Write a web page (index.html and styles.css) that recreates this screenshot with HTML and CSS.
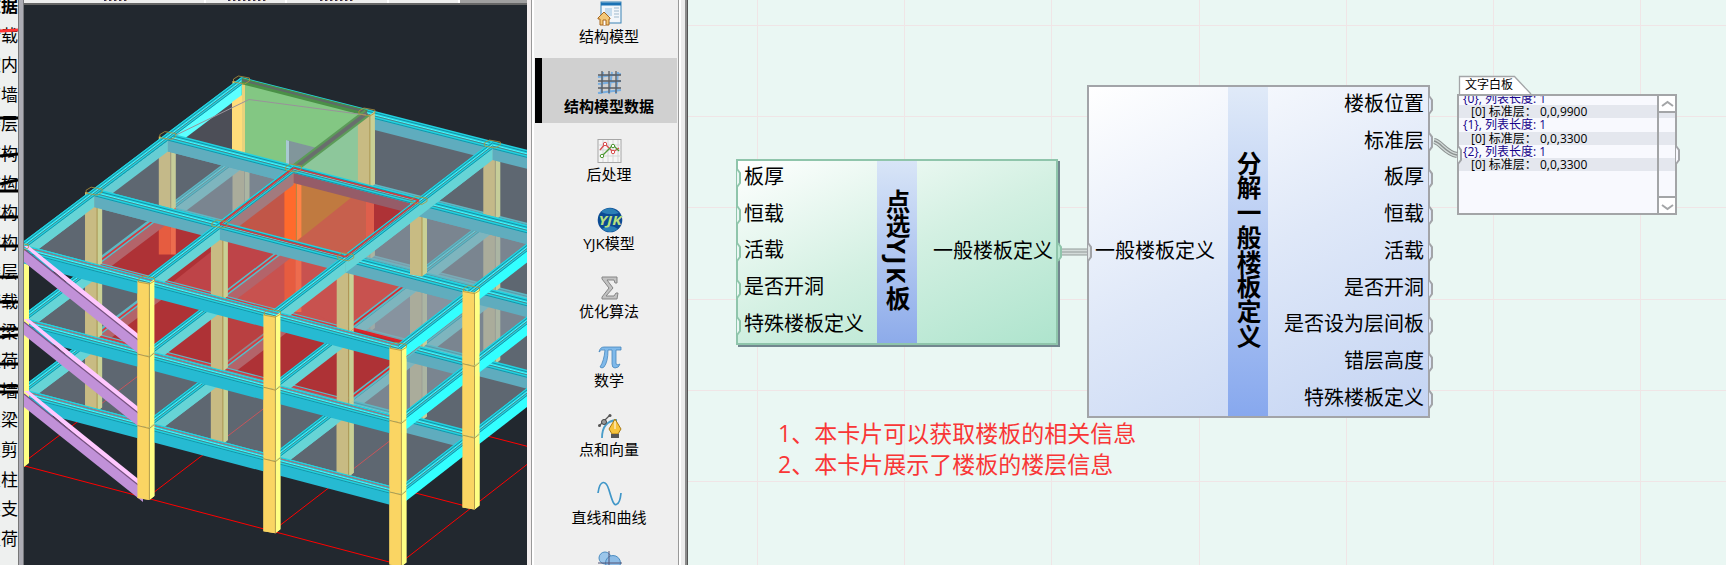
FILE: index.html
```
<!DOCTYPE html>
<html lang="zh-CN">
<head>
<meta charset="utf-8">
<title>结构模型数据</title>
<link rel="stylesheet" href="styles.css">
</head>
<body>
<div class="app">
  <aside class="tree">
    <span class="tree-row bold">数据</span><span class="tree-row">荷载</span><span class="tree-row">室内</span><span class="tree-row">剪墙</span><span class="tree-row">楼层</span><span class="tree-row">结构</span><span class="tree-row">结构</span><span class="tree-row">结构</span><span class="tree-row">结构</span><span class="tree-row">楼层</span><span class="tree-row">荷载</span><span class="tree-row">架梁</span><span class="tree-row">定荷</span><span class="tree-row">剪墙</span><span class="tree-row">架梁</span><span class="tree-row">架剪</span><span class="tree-row">架柱</span><span class="tree-row">架支</span><span class="tree-row">定荷</span>
    <svg class="marks" width="18" height="565"><path d="M0 31L18 30" stroke="#ff3434" stroke-width="3"/><path d="M0 118h18M0 156l18-2M0 184l18-4M0 191h18M0 217h18M0 246h18M0 277h18M0 302h18M0 329h18M0 337l18-2M0 364h18M0 386h18M0 392h18" stroke="#000" stroke-width="3"/></svg>
  </aside>
  <div class="gutter"></div>
  <section class="viewport">
    <div class="tabs"><i class="t1"></i><i class="t2"></i><i class="t3"></i><i class="t4"></i></div>
    <svg id="model" viewBox="24 5 503 560" width="503" height="560"></svg>
  </section>
  <nav class="side">
    <div class="item first"><svg width="26" height="26" viewBox="0 0 26 26"><rect x="4" y="2" width="20" height="21" fill="#f2f6fa" stroke="#3a83b5"/><path d="M4 4h20" stroke="#1b72b4" stroke-width="3"/><path d="M8 8h7v8H8z" fill="#c5dced"/><path d="M17 8h5M17 11h5M17 14h5M17 17h5" stroke="#9fb9cc"/><path d="M1 18l6-6 6 6v1h-1v6H3v-6H1z" fill="#f3c878" stroke="#a8671d"/><path d="M6 25v-5h3v5" fill="#fff" stroke="#a8671d"/></svg><b>结构模型</b></div>
    <div class="item active"><svg width="26" height="26" viewBox="0 0 26 26"><path d="M1 7l23-3M1 14l23-3M1 23l23-3M4 24L6 2M12 24l3-22M19 24l2-22" stroke="#78aee0" stroke-width="2"/><path d="M1 5h23M1 11h23M1 18h23M5 1v22M12 1v22M19 1v22" stroke="#5a5d63" stroke-width="1.3"/></svg><b>结构模型数据</b></div>
    <div class="item"><svg width="26" height="26" viewBox="0 0 26 26"><rect x="1" y="1.500" width="23" height="23" fill="#f5f5f5" stroke="#a6a6a6"/><path d="M6 2v22M11 2v22M16 2v22M21 2v22M2 7h22M2 12h22M2 18h22" stroke="#d5d5d5"/><path d="M3 12l5-6 8 8 6-4" fill="none" stroke="#d94c4c" stroke-width="1.300"/><path d="M5 18L16 7l6 6" fill="none" stroke="#4f9a34" stroke-width="1.300"/><g fill="#fff"><circle cx="8" cy="6" r="1.700" stroke="#d94c4c"/><circle cx="16" cy="14" r="1.700" stroke="#d94c4c"/><circle cx="5" cy="18" r="1.700" stroke="#4f9a34"/><circle cx="16" cy="8" r="1.700" stroke="#4f9a34"/></g></svg><b>后处理</b></div>
    <div class="item"><svg width="26" height="26" viewBox="0 0 26 26"><circle cx="13" cy="13" r="12.300" fill="#0b4a94"/><path d="M4 5Q13-3 22 6 13 9 4 5M5 22q8-6 16 0-8 6-16 0" fill="#2b7fb6"/><text x="13" y="17.500" text-anchor="middle" textLength="23" lengthAdjust="spacingAndGlyphs" class="logo">YJK</text></svg><b>YJK模型</b></div>
    <div class="item"><svg width="26" height="26" viewBox="0 0 26 26"><path d="M5 2h15v6h-2l-1-3h-7l6 8-7 8h8l2-3h2l-1 6H5v-2l7-9-7-9z" fill="#c2c2c2" stroke="#858585"/></svg><b>优化算法</b></div>
    <div class="item"><svg width="26" height="26" viewBox="0 0 26 26"><path d="M2 8Q3 3 7 3h17v3h-5v13q0 3 4 1-1 4-5 4-3 0-3-4V6h-4q0 12-4 17-2 2-4 0 4-6 5-17-4-1-6 2z" fill="#7fb9ea" stroke="#4687bd" stroke-width=".8"/></svg><b>数学</b></div>
    <div class="item"><svg width="26" height="26" viewBox="0 0 26 26"><path d="M5 25q0-17 15-18" fill="none" stroke="#4a9dc9" stroke-width="1.800"/><path d="M2 13L13 2" stroke="#555" stroke-width="1.300"/><circle cx="2.500" cy="12.500" r="1.500" fill="#555"/><circle cx="13" cy="2.500" r="1.500" fill="#555"/><circle cx="7" cy="9" r="2.500" fill="#999" stroke="#444"/><path d="M18 6l6 10-3 5h-6l-3-5z" fill="#f6c33c" stroke="#a97a14"/><path d="M18 8v8" stroke="#fff"/><path d="M14 21h8v4h-8z" fill="#555"/></svg><b>点和向量</b></div>
    <div class="item"><svg width="26" height="26" viewBox="0 0 26 26"><path d="M1 12C3-2 9-1 12 9s5 17 8 14q3-1 4-11" fill="none" stroke="#3f96c8" stroke-width="1.700"/></svg><b>直线和曲线</b></div>
    <div class="item"><svg width="26" height="26" viewBox="0 0 26 26"><circle cx="8" cy="8" r="6" fill="#9cc6ea" stroke="#4d8ec2"/><circle cx="16" cy="13" r="7.500" fill="#8dbce6" stroke="#4d8ec2"/><path d="M12 1v24M1 13h24" stroke="#557"/></svg></div>
  </nav>
  <main class="canvas">
    <svg class="wires" width="1038" height="565" viewBox="688 0 1038 565"><g fill="none"><path d="M1060 252h28" stroke="#939b99" stroke-width="7"/><path d="M1060 252h28" stroke="#d3dbd9" stroke-width="5"/><path d="M1060 252h28" stroke="#939b99"/></g></svg>
    <section class="node pick">
      <div class="inputs"><span>板厚</span><span>恒载</span><span>活载</span><span>是否开洞</span><span>特殊楼板定义</span></div>
      <h2>点选<span class="latin">YJK</span>板</h2>
      <div class="outputs"><span>一般楼板定义</span></div>
    </section>
    <section class="node split">
      <div class="inputs"><span>一般楼板定义</span></div>
      <h2>分解一般楼板定义</h2>
      <div class="outputs"><span>楼板位置</span><span>标准层</span><span>板厚</span><span>恒载</span><span>活载</span><span>是否开洞</span><span>是否设为层间板</span><span>错层高度</span><span>特殊楼板定义</span></div>
    </section>
    <section class="board">
      <div class="rows"><p>{0}, 列表长度: 1</p><p class="v">[0] 标准层：&nbsp;0,0,9900</p><p>{1}, 列表长度: 1</p><p class="v">[0] 标准层：&nbsp;0,0,3300</p><p>{2}, 列表长度: 1</p><p class="v">[0] 标准层：&nbsp;0,0,3300</p></div>
      <div class="scroll"><svg width="17" height="17"><path d="M3 10l5.500-4 5.500 4" /></svg><svg width="17" height="17"><path d="M3 7l5.500 4L14 7"/></svg></div>
    </section>
    <svg class="ports" id="ports" width="1038" height="565" viewBox="688 0 1038 565"><path d="M1459.500 94V76.500h55L1531 94" fill="#fff" stroke="#a3a5a7" stroke-width="1.300"/></svg>
    <span class="tab-title">文字白板</span>
    <div class="note"><p>1、本卡片可以获取楼板的相关信息</p><p>2、本卡片展示了楼板的楼层信息</p></div>
  </main>
</div>
<script src="scene.js"></script>
</body>
</html>
```
FILE: styles.css
```
*{box-sizing:border-box}
body{margin:0;overflow:hidden;font-family:"Open Sans","Noto Sans CJK SC",sans-serif;color:#000}
p,h2{margin:0}
.app{display:grid;grid-template-columns:18px 6px 503px 161px 1038px;height:565px}
.tree{position:relative;overflow:hidden;background:#eef0ef;height:565px;display:flex;flex-direction:column;align-items:flex-end;padding-right:0}
.tree-row{flex:none;height:29.600px;line-height:29.600px;font-size:17px;white-space:nowrap}
.tree-row:first-child{margin-top:-9px}
.bold{font-weight:700}
.marks{position:absolute;left:0;top:0}
.gutter{background:#acacb4;border-left:1px solid #777;border-right:1px solid #77787c}
.viewport{background:#22282f;overflow:hidden;height:565px}
.tabs{height:5px;background:#a0a0a0;border-bottom:2px solid #666;display:flex}
.tabs i{height:3px;background:#ededed;border-right:2px solid #fff;position:relative}
.t1{width:182px}.t2{width:81px}.t3{width:102px}.t4{width:71px}
.tabs i::after{content:"";display:block;height:1px;background:repeating-linear-gradient(90deg,#35335a 0 2px,#c9a26b 2px 3px,#ededed 3px 5px)}
.tabs .t1::after{width:23px;margin-left:80px}.tabs .t2::after{width:38px;margin-left:22px}.tabs .t3::after{width:34px;margin-left:33px}.tabs .t4::after{display:none}
#model{display:block}
.side{height:565px;overflow:hidden;background:linear-gradient(90deg,#f2eeee 4px,#999 4px 5px,#fff 5px 7px,#efefef 7px 151px,#999 151px 152px,#fff 152px 154px,#ececec 154px 158px,#8a8a8a 158px 160px,#555 160px)}
.item{height:68.700px;width:143px;margin-left:8px;padding:12px 0 0 6px;display:flex;flex-direction:column;align-items:center;font-size:15px;line-height:21px}
.item.first{height:58px;padding-top:0}
.item.active{background:#d0d0d0;border-left:7px solid #000;height:65px;width:142px;padding:12px 0 0;margin-bottom:3px}
.item svg{flex:none}
.item b{font-weight:400;white-space:nowrap;padding-right:1px}
.item.active b{font-weight:700;padding-right:1px}
.logo{font:bold italic 12px "Open Sans",sans-serif;fill:#b9e07f}
.canvas{position:relative;overflow:hidden;background:repeating-linear-gradient(90deg,transparent 0 69px,#f0e5e6 69px 70px,transparent 70px 147.200px),repeating-linear-gradient(180deg,transparent 0 25px,#f0e5e6 25px 26px,transparent 26px 91.200px),#eaf7f3}
.wires,.ports{position:absolute;left:0;top:0}
.node{position:absolute;display:flex;font-size:20px;line-height:36.700px;white-space:nowrap}
.node h2{width:40px;flex:none;font-size:24.700px;line-height:38px;writing-mode:vertical-rl;text-align:center;background:linear-gradient(#d8e5f7,#8dabea);padding-right:2px;padding-bottom:4px}
.latin{letter-spacing:2.500px}
.pick{left:48px;top:159px;width:322px;height:186px;border:2px solid #8fc5ab;background:linear-gradient(155deg,#fff,#d3f0e2 50%,#aee4cd);box-shadow:2px 2px #72878f}
.pick .inputs{width:139px;padding-left:6px;margin-top:-2px}
.inputs,.outputs{display:flex;flex-direction:column}
.pick .outputs{flex:1;align-items:flex-end;justify-content:center;padding-right:3px;padding-bottom:2px}
.pick .inputs span{height:36.700px}
.split{left:399px;top:85px;width:343px;height:333px;border:2px solid #a2a4a8;background:linear-gradient(155deg,#fff,#dfe8f8 50%,#c4d4f3)}
.split .inputs{width:139px;padding-left:6px;justify-content:center;padding-bottom:1px}
.split .outputs{flex:1;align-items:flex-end;padding-right:4px;margin-top:-1px}
.split h2{background:linear-gradient(#e0eaf8,#87a8ee)}
.board{position:absolute;left:769px;top:94px;width:220px;height:121px;border:2px solid #a3a5a7;background:#f8f9fe;display:flex;overflow:hidden}
.rows{width:198px;font-size:12px;line-height:13.200px;margin-top:-4px;color:#16028a;white-space:nowrap}
.rows p{height:13.200px;padding-left:4px}
.rows .v{background:#e4e7ee;width:216px;padding-left:12px;color:#000}
.scroll{width:19px;border-left:2px solid #a3a5a7;display:flex;flex-direction:column;justify-content:space-between;position:relative}
.scroll svg{background:#fff;flex:none}
.scroll svg:first-child{border-bottom:2px solid #a3a5a7}
.scroll svg:last-child{border-top:2px solid #a3a5a7}
.scroll path{fill:none;stroke:#a3a5a7;stroke-width:2}
.tab-title{position:absolute;left:777px;top:77px;font-size:12px;line-height:16px}
.note{position:absolute;left:90px;top:418px;color:#f93636;font-size:23px;line-height:31px;white-space:nowrap}
```
FILE: scene.js
```
(() => {
const svg = document.getElementById('model');
const drop = [217, 144.5, 73, 0];
const out = [];
const node = (c, r, l) => [241.5 + 125.4 * c - 73.7 * r + c * r * 0.2, 81 + 32 * c + 55.6 * r + c * r * 0.4 + drop[l]];
const poly = (pts, fill, extra = '') => out.push(`<polygon points="${pts.map(p => p.join()).join(' ')}" fill="${fill}" ${extra}/>`);
const line = (a, b, color, w = 1, dy = 0) => out.push(`<line x1="${a[0]}" y1="${a[1] + dy}" x2="${b[0]}" y2="${b[1] + dy}" stroke="${color}" stroke-width="${w}"/>`);
const band = (a, b, t, u, fill, extra) => poly([[a[0], a[1] + t], [b[0], b[1] + t], [b[0], b[1] + u], [a[0], a[1] + u]], fill, extra);

const hi = { row: '#26bad2', col: '#33ffff', left: '#fad563', right: '#ffff84' };
const lo = { row: '#60adbe', col: '#66d4d6', left: '#c8bb83', right: '#c9d095' };
function beamTop(a, b) {
  band(a, b, -4, 4, '#22d3e0');
  line(a, b, '#168fa5', 1, -2);
  line(a, b, '#4df7ff', 1, 0);
  line(a, b, '#566c72', .8, 1);
  line(a, b, '#1793a8', 1, 3.5);
}
const dimTop = (a, b) => { band(a, b, -4, 4, '#59bcc8'); line(a, b, '#8a6d74', 1, -1); line(a, b, '#2a95a8', 1, 2); };
const face = (a, b, fill) => band(a, b, 3, 15, fill);
function column(c, r, l, tone, u = drop[l - 1] - drop[l]) {
  const [x, y] = node(c, r, l);
  poly([[x - 9, y], [x + 3, y + 2], [x + 3, y + u + 2], [x - 9, y + u]], tone.left);
  poly([[x + 3, y + 2], [x + 8, y - 2], [x + 8, y + u - 2], [x + 3, y + u + 2]], tone.right);
  line([x + 3, y + 2], [x + 3, y + u + 2], '#a38a43', .8);
}
const cell = (c, r, l, fill, extra) => poly([node(c, r, l), node(c + 1, r, l), node(c + 1, r + 1, l), node(c, r + 1, l)], fill, extra);

for (let i = 0; i < 4; i++) {
  line(node(0, i, 0), node(3, i, 0), '#f00');
  line(node(i, 0, 0), node(i, 3, 0), '#f00');
}
for (let l = 1; l < 4; l++) {
  for (let r = 0; r < 4; r++) for (let c = 0; c < 4; c++) column(c, r, l, hi);
  for (let r = 0; r < 3; r++) for (let c = 0; c < 3; c++) {
    face(node(c, r, l), node(c + 1, r, l), hi.row);
    face(node(c, r, l), node(c, r + 1, l), hi.col);
  }
  for (let r = 0; r < 3; r++) for (let c = 0; c < 3; c++)
    if (!(l === 3 && r < 2 && c === r)) cell(c, r, l, 'rgb(147,160,172)', 'fill-opacity=".53"');
  for (let i = 0; i < 4; i++) for (let j = 0; j < 3; j++) {
    beamTop(node(j, i, l), node(j + 1, i, l));
    beamTop(node(i, j, l), node(i, j + 1, l));
  }
}
/* shear walls around the open corner bay */
const A0 = node(0, 0, 3), B0 = node(1, 0, 3), A1 = node(0, 1, 3), B1 = node(1, 1, 3);
poly([[232, 90], [232, 153], A1], '#4c4e57');
poly([A0, A1, [184, 139], [241, 96]], '#5cffff');
poly([[232, 102], [242, 95], [242, 156], [232, 153]], '#ffdd7a');
poly([[242, 84], [245, 84], [245, 157], [242, 156]], '#e9d27c');
poly([[245, 84], B0, B1, [245, 157]], '#83c783');
poly([B0, [366, 186], B1], '#8dc79b');
poly([[286, 140], [317, 148], [292, 168], [286, 164]], '#81969b');
poly([[286, 140], [289, 141], [289, 165], [286, 164]], '#a9c9d2');
column(1, 0, 3, lo);
line(A0, B0, '#4a9047', 6, 0);
line(A0, B0, '#5f6867', 2, -1);
line(B0, B1, '#5c9b59', 8); line(B0, B1, '#696e6d', 4);
out.push('<path d="M172 137L249 99.500L366 115" fill="none" stroke="#99929a"/>');

/* selected slabs */
const warm = { left: '#e65c40', right: '#ed6c4e' };
const glow = { left: '#ff6a2c', right: '#ff8347' };
const redBeams = l => {
  band(node(0, 1, l), node(0, 2, l), 3, 14, '#b3646a');
  band(node(1, 1, l), node(1, 2, l), 3, 14, '#b3646a');
  line(node(0, 1, l), node(0, 2, l), '#59bcc8', 5, 0);
  line(node(1, 1, l), node(1, 2, l), '#59bcc8', 5, 0);
  line(node(0, 1, l), node(0, 2, l), '#d8383e', 1.800);
  line(node(1, 1, l), node(1, 2, l), '#d8383e', 1.800);
  line(node(0, 1, l), node(2, 1, l), '#e02228', 2.500);
  line(node(2, 1, l), node(2, 2, l), '#59bcc8', 5);
  line(node(2, 1, l), node(2, 2, l), '#d8282e', 1.800);
};
cell(0, 1, 1, '#ae3236');
cell(1, 1, 1, '#ae3236');
column(0, 1, 2, warm);
column(1, 1, 2, warm);
redBeams(1);
cell(0, 1, 2, '#ae3236');
cell(1, 1, 2, '#c8524f');
poly([[168, 286], [222, 243], [244, 231], node(1, 1, 2), node(1, 2, 2)], '#be4448');
poly([node(1, 2, 2), node(1, 2, 1), node(1, 1, 1), [292, 300], node(2, 2, 2)], '#c8524f', 'fill-opacity=".45"');
{
  const [x, y] = A1;
  poly([[x - 9, y + 88], [x + 3, y + 82], [x + 3, y + 118], [x - 9, y + 118]], warm.left);
  poly([[x + 3, y + 82], [x + 8, y + 84], [x + 8, y + 118], [x + 3, y + 118]], warm.right);
  const [bx, by] = node(1, 1, 2);
  poly([[bx - 9, by], [bx + 2, by], [bx + 2, by + 70], [bx - 9, by + 68]], warm.left);
  poly([[bx + 2, by], [bx + 8, by], [bx + 8, by + 70], [bx + 2, by + 70]], warm.right);
}
redBeams(2);
poly([B1, node(2, 1, 3), node(2, 2, 3), node(1, 2, 3)], '#c7604d');
poly([B1, [292, 241], node(1, 2, 3)], '#c15648');
poly([[297, 178], [352, 197], [297, 241]], '#c07a40');
poly([[369, 192], [414, 200], [374, 234], [369, 236]], '#ae3236');
poly([[366, 190], [374, 192], [374, 234], [366, 240]], '#df5f4c');
column(1, 1, 3, glow, 70);
line([230, 226], [346, 256], '#e02228', 3);
band(A1, B1, 3, 15, lo.row);
band(B1, node(2, 1, 3), 3, 14, '#955c68');
band(B1, node(1, 2, 3), 3, 16, '#a27a7e');

/* parts in front of the selected slabs */
for (let l = 1; l < 4; l++) {
  for (const c of [0, 1, 2]) column(c, 2, l, lo);
  for (const c of [0, 1, 2]) {
    const a = node(c, 2, l), b = node(c + 1, 2, l);
    if (l === 3) { face(a, b, lo.row); beamTop(a, b); }
    else if (c < 2) { dimTop(a, b); line(a, b, '#d8383e', 1.500, -2); }
    const e = node(c, 3, l);
    face(a, e, lo.col); beamTop(a, e);
  }
}
column(2, 1, 3, lo);
for (const [a, b] of [[[0, 1], [1, 1]], [[1, 1], [2, 1]], [[2, 1], [3, 1]], [[1, 1], [1, 2]], [[2, 1], [2, 2]], [[2, 0], [2, 1]], [[0, 0], [0, 1]], [[0, 1], [0, 2]]]) {
  const p = node(...a, 3), q = node(...b, 3);
  if (a[0] === 2) face(p, q, a[1] === 1 && b[1] === 1 ? lo.row : lo.col);
  beamTop(p, q);
}
const redEdge = [node(1, 1, 3), node(2, 1, 3), node(2, 2, 3), node(1, 2, 3)];
redEdge.forEach((p, i) => line(p, redEdge[(i + 1) % 4], '#cf3c40', 1.8, -1));

/* outer faces, braces and outer columns */
for (let l = 1; l < 4; l++) {
  for (let i = 0; i < 3; i++) {
    let a = node(i, 3, l), b = node(i + 1, 3, l);
    face(a, b, hi.row); beamTop(a, b); line(a, b, '#d66a6d', .8, -2);
    a = node(3, i, l); b = node(3, i + 1, l);
    face(a, b, hi.col); beamTop(a, b);
  }
}
poly([[24, 264], [29, 266], [29, 463], [24, 467]], hi.right);
for (const d of [0, 73, 145]) {
  poly([[24, 246 + d], [29, 246 + d], [142, 337 + d], [142, 346 + d]], '#ffc8ff');
  poly([[24, 249 + d], [143, 344 + d], [143, 357 + d], [24, 262 + d]], '#c191d8');
  line([24, 249 + d], [142, 343 + d], '#75517f', 1.2);
}
for (const [c, r] of [[3, 2], [1, 3], [2, 3], [3, 3]]) for (let l = 3; l > 0; l--) {
  column(c, r, l, hi);
  const [x, y] = node(c, r, l);
  if (l < 3) out.push(`<path d="M${x - 9} ${y}l12 3l5-4" fill="none" stroke="#a38a43" stroke-width=".8"/>`);
}
for (let r = 0; r < 4; r++) for (let c = 0; c < 4; c++) {
  const [x, y] = node(c, r, 3);
  out.push(`<path d="M${x - 8} ${y + 1}v-3l5-3l11 2v3l-5 3z" fill="none" stroke="#b1953c" stroke-opacity=".8"/>`);
}
svg.innerHTML = out.join('');

const ports = document.getElementById('ports');
const port = (x, y, color, fill) =>
  `<path d="M${x} ${y - 9}l3 4v10l-3 4" fill="${fill}" stroke="${color}" stroke-width="2"/>`;
let p = '';
for (const y of [178, 215, 252, 289, 326]) p += port(737, y, '#8fc5ab', '#eaf7f3');
p += port(1058, 252, '#8fc5ab', '#b8e5d0') + port(1088, 252, '#a2a4a8', '#dfe5e5');
for (let i = 0; i < 9; i++) p += port(1429, 105 + i * 36.8, '#a2a4a8', '#dfe7f7');
p += port(1458, 155, '#a2a4a8', '#eaf7f3') + port(1676, 155, '#a2a4a8', '#f8f9fe');
p += '<g fill="none"><path d="M1434 141C1441 142 1445 153 1457 155" stroke="#8b9190" stroke-width="6"/><path d="M1434 141C1441 142 1445 153 1457 155" stroke="#d3dbd9" stroke-width="4"/><path d="M1434 141C1441 142 1445 153 1457 155" stroke="#8b9190" stroke-width="1.500"/></g>';
ports.insertAdjacentHTML('beforeend', p);
})();
```
